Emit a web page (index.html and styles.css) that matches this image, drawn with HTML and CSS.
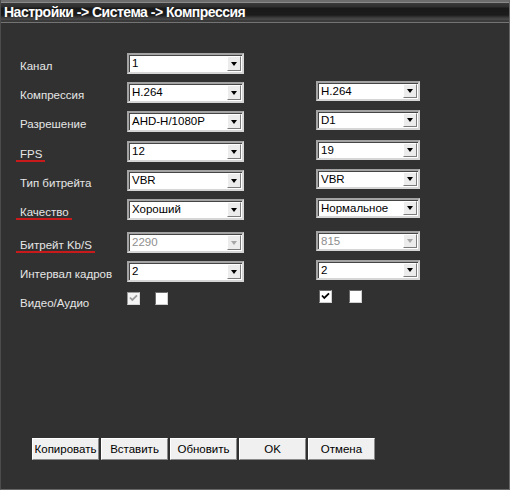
FILE: index.html
```html
<!DOCTYPE html>
<html lang="ru">
<head>
<meta charset="utf-8">
<title>Компрессия</title>
<link rel="stylesheet" href="styles.css">
</head>
<body>
<div class="window">
  <div class="titlebar">Настройки -&gt; Система -&gt; Компрессия</div>
  <div class="form">
    <div class="row">
      <div class="label">Канал</div>
      <div class="sel"><span class="val">1</span><span class="btn"></span></div>
      <div></div>
      <div></div>
    </div>
    <div class="row">
      <div class="label">Компрессия</div>
      <div class="sel"><span class="val">H.264</span><span class="btn"></span></div>
      <div></div>
      <div class="sel r"><span class="val">H.264</span><span class="btn"></span></div>
    </div>
    <div class="row">
      <div class="label">Разрешение</div>
      <div class="sel"><span class="val">AHD-H/1080P</span><span class="btn"></span></div>
      <div></div>
      <div class="sel r"><span class="val">D1</span><span class="btn"></span></div>
    </div>
    <div class="row row-shift">
      <div class="label"><span class="mark">FPS</span></div>
      <div class="sel"><span class="val">12</span><span class="btn"></span></div>
      <div></div>
      <div class="sel r"><span class="val">19</span><span class="btn"></span></div>
    </div>
    <div class="row">
      <div class="label">Тип битрейта</div>
      <div class="sel"><span class="val">VBR</span><span class="btn"></span></div>
      <div></div>
      <div class="sel r"><span class="val">VBR</span><span class="btn"></span></div>
    </div>
    <div class="row">
      <div class="label"><span class="mark">Качество</span></div>
      <div class="sel"><span class="val">Хороший</span><span class="btn"></span></div>
      <div></div>
      <div class="sel r"><span class="val">Нормальное</span><span class="btn"></span></div>
    </div>
    <div class="row row-gap">
      <div class="label"><span class="mark">Битрейт Kb/S</span></div>
      <div class="sel dis"><span class="val">2290</span><span class="btn"></span></div>
      <div></div>
      <div class="sel r dis"><span class="val">815</span><span class="btn"></span></div>
    </div>
    <div class="row">
      <div class="label">Интервал кадров</div>
      <div class="sel"><span class="val">2</span><span class="btn"></span></div>
      <div></div>
      <div class="sel r"><span class="val">2</span><span class="btn"></span></div>
    </div>
    <div class="row">
      <div class="label">Видео/Аудио</div>
      <div class="checks">
        <span class="cb dis"><svg viewBox="0 0 11 11" width="11" height="11"><path d="M2 4.5 L4.3 7 L9 2.3" fill="none" stroke="#9a9a9a" stroke-width="1.8"/></svg></span>
        <span class="cb cb-second"></span>
      </div>
      <div></div>
      <div class="checks checks-r">
        <span class="cb"><svg viewBox="0 0 11 11" width="11" height="11"><path d="M2 4.5 L4.3 7 L9 2.3" fill="none" stroke="#000" stroke-width="1.8"/></svg></span>
        <span class="cb cb-second-r"></span>
      </div>
    </div>
  </div>
  <div class="buttons">
    <div class="button">Копировать</div>
    <div class="button">Вставить</div>
    <div class="button">Обновить</div>
    <div class="button">OK</div>
    <div class="button">Отмена</div>
  </div>
</div>
</body>
</html>
```

FILE: styles.css
```css
html, body {
  margin: 0;
  padding: 0;
  background: #313131;
}

.window {
  width: 510px;
  height: 490px;
  box-sizing: border-box;
  background: #313131;
  border-left: 1px solid #4c4c4c;
  border-right: 1px solid #666;
  border-bottom: 1px solid #666;
  display: flex;
  flex-direction: column;
  font-family: "Liberation Sans", Arial, sans-serif;
}

.titlebar {
  border-bottom: 1px solid #737373;
  background: linear-gradient(to bottom,
    #6c6c6c 0px, #6c6c6c 2px,
    #8a8a8a 2px, #8a8a8a 3px,
    #3a3a3a 3px, #2e2e2e 7px,
    #1a1a1a 8px, #1c1c1c 15px,
    #404040 18px, #4a4a4a 20px,
    #3a3a3a 20px, #3a3a3a 22px);
  color: #fff;
  font-weight: bold;
  font-size: 14px;
  letter-spacing: -0.5px;
  line-height: 20px;
  padding: 2px 0 0 3px;
  height: 20px;
  white-space: nowrap;
}

.form {
  padding: 30px 0 0 19px;
  display: flex;
  flex-direction: column;
}

.row {
  display: grid;
  grid-template-columns: 107px 117px 72px 104px;
  height: 21px;
  margin-bottom: 8px;
}

.row-shift {
  margin-top: 1px;
}

.row-gap {
  margin-top: 4px;
}

.label {
  color: #e6e6e6;
  font-size: 11.5px;
  line-height: 12px;
  padding-top: 7px;
  white-space: nowrap;
}

.mark {
  display: inline-block;
  border-bottom: 2px solid #c81a1a;
  margin-left: -4px;
  padding: 0 3px 0 4px;
}

.sel {
  display: flex;
  height: 21px;
  box-sizing: border-box;
  border: 2px solid;
  border-color: #a4a4a4 #d6d6d6 #d6d6d6 #a4a4a4;
  background: #fff;
  box-shadow: inset 1px 1px 0 #454545;
}

.sel.r {
  height: 20px;
  margin-top: -1px;
}

.val {
  flex: 1;
  padding-left: 3px;
  font-size: 11.5px;
  line-height: 16px;
  color: #000;
  white-space: nowrap;
  overflow: hidden;
}

.btn {
  width: 12px;
  margin: 1px 1px 1px 0;
  background: #ececec;
  border: 1px solid;
  border-color: #fff #7c7c7c #7c7c7c #fff;
  display: flex;
  align-items: center;
  justify-content: center;
}

.btn::after {
  content: "";
  border-left: 3px solid transparent;
  border-right: 3px solid transparent;
  border-top: 4px solid #000;
}

.sel.dis .val {
  color: #8e8e8e;
}

.sel.dis .btn::after {
  border-top-color: #a6a6a6;
}

.checks {
  display: flex;
  align-items: flex-start;
  padding-top: 2px;
}

.checks-r {
  padding-top: 0;
  padding-left: 3px;
}

.cb {
  width: 13px;
  height: 13px;
  box-sizing: border-box;
  border: 1px solid;
  border-color: #6c6c6c #cfcfcf #cfcfcf #6c6c6c;
  background: #fff;
  display: flex;
  align-items: center;
  justify-content: center;
}

.cb.dis {
  background: #f4f4f4;
  border-color: #9a9a9a #d8d8d8 #d8d8d8 #9a9a9a;
}

.cb-second {
  margin-left: 15px;
}

.cb-second-r {
  margin-left: 17px;
}

.buttons {
  margin-top: auto;
  display: flex;
  gap: 2px;
  padding: 0 0 29px 31px;
}

.button {
  width: 67px;
  height: 22px;
  box-sizing: border-box;
  background: #f0f0f0;
  border: 1px solid;
  border-color: #fff #8a8a8a #8a8a8a #fff;
  color: #000;
  font-size: 11.5px;
  display: flex;
  align-items: center;
  justify-content: center;
  white-space: nowrap;
}
```
